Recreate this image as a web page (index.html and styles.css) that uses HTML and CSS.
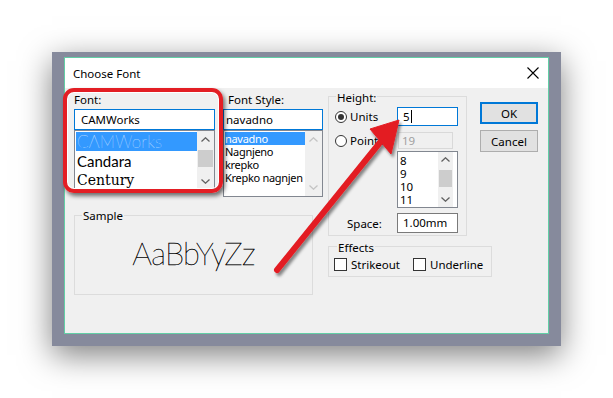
FILE: index.html
```html
<!DOCTYPE html>
<html>
<head>
<meta charset="utf-8">
<link rel="stylesheet" href="styles.css">
</head>
<body>
<div class="frame">
  <div class="dialog">
    <div class="titlebar">
      <span class="title">Choose Font</span>
      <svg class="close" width="12" height="12" viewBox="0 0 12 12"><path d="M0.5 0.5 L11.5 11.5 M11.5 0.5 L0.5 11.5" stroke="#000" stroke-width="1.1" fill="none"/></svg>
    </div>
    <div class="content">
      <div class="left">
        <div class="top-row">
          <div class="col col-font">
            <div class="label">Font:</div>
            <div class="edit focus pad6">CAMWorks</div>
            <div class="list list-font">
              <div class="items">
                <div class="fitem sel thin">CAMWorks</div>
                <div class="fitem candara">Candara</div>
                <div class="fitem century">Century</div>
              </div>
              <div class="sb sb17">
                <div class="sbtn"><svg width="9" height="5" viewBox="0 0 9 5"><path d="M0.5 4.5 L4.5 0.8 L8.5 4.5" stroke="#606060" stroke-width="1.3" fill="none"/></svg></div>
                <div class="track"><div class="thumb t-font"></div></div>
                <div class="sbtn"><svg width="9" height="5" viewBox="0 0 9 5"><path d="M0.5 0.5 L4.5 4.2 L8.5 0.5" stroke="#606060" stroke-width="1.3" fill="none"/></svg></div>
              </div>
            </div>
          </div>
          <div class="col col-style">
            <div class="label indent">Font Style:</div>
            <div class="edit focus pad2">navadno</div>
            <div class="list list-style">
              <div class="items">
                <div class="sitem sel">navadno</div>
                <div class="sitem">Nagnjeno</div>
                <div class="sitem">krepko</div>
                <div class="sitem">Krepko nagnjen</div>
              </div>
              <div class="sb sb17">
                <div class="sbtn"><svg width="9" height="5" viewBox="0 0 9 5"><path d="M0.5 4.5 L4.5 0.8 L8.5 4.5" stroke="#c4c4c4" stroke-width="1.3" fill="none"/></svg></div>
                <div class="track"></div>
                <div class="sbtn"><svg width="9" height="5" viewBox="0 0 9 5"><path d="M0.5 0.5 L4.5 4.2 L8.5 0.5" stroke="#c4c4c4" stroke-width="1.3" fill="none"/></svg></div>
              </div>
            </div>
          </div>
        </div>
        <div class="group sample">
          <div class="glabel">Sample</div>
          <div class="sample-text">AaBbYyZz</div>
        </div>
      </div>
      <div class="mid">
        <div class="group height">
          <div class="glabel">Height:</div>
          <div class="hrow r1">
            <span class="radio on"></span><span class="rtext">Units</span>
            <div class="edit focus small e5">5<span class="caret"></span></div>
          </div>
          <div class="hrow r2">
            <span class="radio"></span><span class="rtext">Points</span>
            <div class="disabled">19</div>
          </div>
          <div class="list list-size">
            <div class="items">
              <div class="zitem">8</div>
              <div class="zitem">9</div>
              <div class="zitem">10</div>
              <div class="zitem">11</div>
            </div>
            <div class="sb sb15">
              <div class="sbtn s15"><svg width="9" height="5" viewBox="0 0 9 5"><path d="M0.5 4.5 L4.5 0.8 L8.5 4.5" stroke="#606060" stroke-width="1.3" fill="none"/></svg></div>
              <div class="track"><div class="thumb t-size"></div></div>
              <div class="sbtn s15"><svg width="9" height="5" viewBox="0 0 9 5"><path d="M0.5 0.5 L4.5 4.2 L8.5 0.5" stroke="#606060" stroke-width="1.3" fill="none"/></svg></div>
            </div>
          </div>
          <div class="hrow r3">
            <span class="stext">Space:</span>
            <div class="edit small espace">1.00mm</div>
          </div>
        </div>
        <div class="group effects">
          <div class="glabel">Effects</div>
          <div class="crow">
            <span class="citem first"><span class="check"></span>Strikeout</span>
            <span class="citem"><span class="check"></span>Underline</span>
          </div>
        </div>
      </div>
      <div class="buttons">
        <div class="btn default">OK</div>
        <div class="btn">Cancel</div>
      </div>
    </div>
  </div>
</div>
<div class="highlight"></div>
<svg class="arrow" width="613" height="398" viewBox="0 0 613 398">
  <defs>
    <filter id="sh" x="-30%" y="-30%" width="160%" height="160%">
      <feDropShadow dx="2" dy="3" stdDeviation="1.6" flood-color="#000" flood-opacity="0.45"/>
    </filter>
  </defs>
  <g filter="url(#sh)">
    <line x1="277" y1="270" x2="382" y2="140" stroke="#e31e24" stroke-width="6" stroke-linecap="round"/>
    <polygon points="399,120 370,129 391,154" fill="#e31e24" stroke="#e31e24" stroke-width="1" stroke-linejoin="round"/>
  </g>
</svg>
</body>
</html>
```

FILE: styles.css
```css
* { box-sizing: border-box; }
html, body { margin: 0; padding: 0; }
body {
  width: 613px;
  height: 398px;
  overflow: hidden;
  background: #ffffff;
  padding: 52px 0 0 52px;
  position: relative;
  font-family: "Noto Sans", "Open Sans", sans-serif;
  font-size: 11.5px;
  color: #000;
}
.frame {
  width: 509px;
  height: 294px;
  background: #868a9c;
  padding: 5px 12px 12px 12px;
  box-shadow: 0 9px 30px rgba(0,0,0,0.5);
}
.dialog {
  width: 485px;
  height: 277px;
  border: 1px solid #62cfa6;
  background: #f0f0f0;
  display: flex;
  flex-direction: column;
}
.titlebar {
  height: 30px;
  background: #fff;
  display: flex;
  align-items: center;
  justify-content: space-between;
  padding: 0 9px 0 8px;
}
.title { font-size: 11.5px; line-height: 15px; }
.close { display: block; }
.content {
  display: flex;
  align-items: flex-start;
  padding: 4px 0 0 9px;
}
.left { width: 249px; }
.top-row { display: flex; gap: 8px; align-items: flex-start; }
.col-font { width: 141px; }
.col-style { width: 100px; }
.label { height: 15px; line-height: 15px; margin-bottom: 2px; }
.label.indent { padding-left: 5px; }
.edit {
  height: 21px;
  line-height: 19px;
  border: 1px solid #7a7a7a;
  background: #fff;
  white-space: nowrap;
  overflow: hidden;
}
.edit.focus { border-color: #0078d7; }
.pad6 { padding-left: 6px; }
.pad2 { padding-left: 2px; }
.list {
  border: 1px solid #828790;
  background: #fff;
  display: flex;
  overflow: hidden;
}
.list .items { flex: 1; padding: 1px 0 0 1px; overflow: hidden; min-width: 0; }
.list-font { height: 61px; }
.list-style { height: 67px; }
.fitem { white-space: nowrap; padding-left: 1px; }
.fitem.sel { height: 19px; line-height: 19px; background: #3399ff; color: #fff; }
.thin { font-family: "Lato", sans-serif; font-weight: 100; font-size: 17px; letter-spacing: 0.2px; }
.candara { height: 20px; line-height: 20px; font-family: "Lato", sans-serif; font-size: 15px; }
.century { height: 19px; line-height: 19px; font-family: "DejaVu Serif", serif; font-size: 14px; }
.sitem { height: 13px; line-height: 13px; white-space: nowrap; font-size: 11px; letter-spacing: -0.3px; }
.sitem.sel { background: #3399ff; color: #fff; }
.sb { background: #f0f0f0; display: flex; flex-direction: column; flex: none; }
.sb17 { width: 17px; }
.sb15 { width: 15px; margin-right: 4px; }
.sbtn { height: 17px; display: flex; align-items: center; justify-content: center; flex: none; }
.sbtn.s15 { height: 15px; }
.track { flex: 1; position: relative; }
.thumb { background: #cdcdcd; margin: 0 1px; }
.t-font { height: 17px; margin-top: 2px; }
.t-size { height: 17px; margin-top: 3px; }

.group {
  border: 1px solid #dcdcdc;
}
.glabel {
  display: block;
  width: max-content;
  height: 15px;
  line-height: 15px;
  margin: -7px 0 0 7px;
  padding: 0 1px;
  background: #f0f0f0;
}
.sample {
  width: 239px;
  height: 80px;
  margin-top: 18px;
}
.sample .glabel { margin-top: -8px; }
.sample-text {
  margin-top: 15px;
  text-align: center;
  font-family: "Lato", sans-serif;
  font-weight: 100;
  font-size: 31px;
  line-height: 31px;
  color: #000;
  -webkit-text-stroke: 0.35px #000;
  letter-spacing: -0.8px;
}
.mid { width: 152px; margin-left: 5px; }
.height {
  width: 139px;
  height: 140px;
  margin-top: 4px;
  padding: 0 8px 0 6px;
}
.height .glabel { margin-left: 1px; }
.hrow { display: flex; align-items: center; }
.r1 { height: 19px; margin-top: 2px; }
.r2 { height: 17px; margin-top: 6px; }
.r3 { height: 20px; margin-top: 5px; }
.radio {
  width: 12px; height: 12px;
  border: 1px solid #333;
  border-radius: 50%;
  background: #fff;
  display: flex; align-items: center; justify-content: center;
  flex: none;
}
.radio.on::after {
  content: "";
  width: 6px; height: 6px;
  border-radius: 50%;
  background: #333;
}
.rtext { margin-left: 3px; }
.edit.small { margin-left: auto; width: 61px; }
.e5 { height: 19px; line-height: 17px; padding-left: 5px; display: flex; align-items: center; }
.caret { display: inline-block; width: 1px; height: 13px; background: #000; margin-left: 1px; }
.disabled {
  margin-left: auto;
  margin-right: 5px;
  width: 55px;
  height: 17px;
  line-height: 15px;
  border: 1px solid #d9d9d9;
  background: #f0f0f0;
  color: #a0a0a0;
  padding-left: 3px;
}
.list-size {
  margin: 2px 0 0 62px;
  width: 61px;
  height: 57px;
}
.list-size .items { padding: 2px 0 0 2px; }
.zitem { height: 13px; line-height: 13px; }
.stext { margin-left: 12px; }
.espace { height: 20px; line-height: 18px; padding-left: 5px; }

.effects {
  width: 164px;
  height: 31px;
  margin-top: 10px;
  padding-left: 5px;
}
.effects .glabel { margin-left: 3px; }
.crow { display: flex; align-items: center; height: 13px; margin-top: 3px; }
.citem { display: flex; align-items: center; line-height: 13px; }
.citem.first { width: 79px; }
.check {
  width: 13px; height: 13px;
  border: 1px solid #333;
  background: #fff;
  margin-right: 4px;
  flex: none;
}
.buttons { width: 58px; margin-left: 0; margin-top: 10px; display: flex; flex-direction: column; gap: 6px; }
.btn {
  height: 22px;
  border: 1px solid #adadad;
  background: #e1e1e1;
  display: flex; align-items: center; justify-content: center;
  line-height: 15px;
}
.btn.default { border: 2px solid #0078d7; }

.highlight {
  position: absolute;
  left: 63px; top: 88px;
  width: 160px; height: 105px;
  border: 4px solid #e31e24;
  border-radius: 11px;
  box-shadow: inset 0 0 0 1px #fff, 2px 3px 4px rgba(0,0,0,0.55);
}
.arrow { position: absolute; left: 0; top: 0; }
```
